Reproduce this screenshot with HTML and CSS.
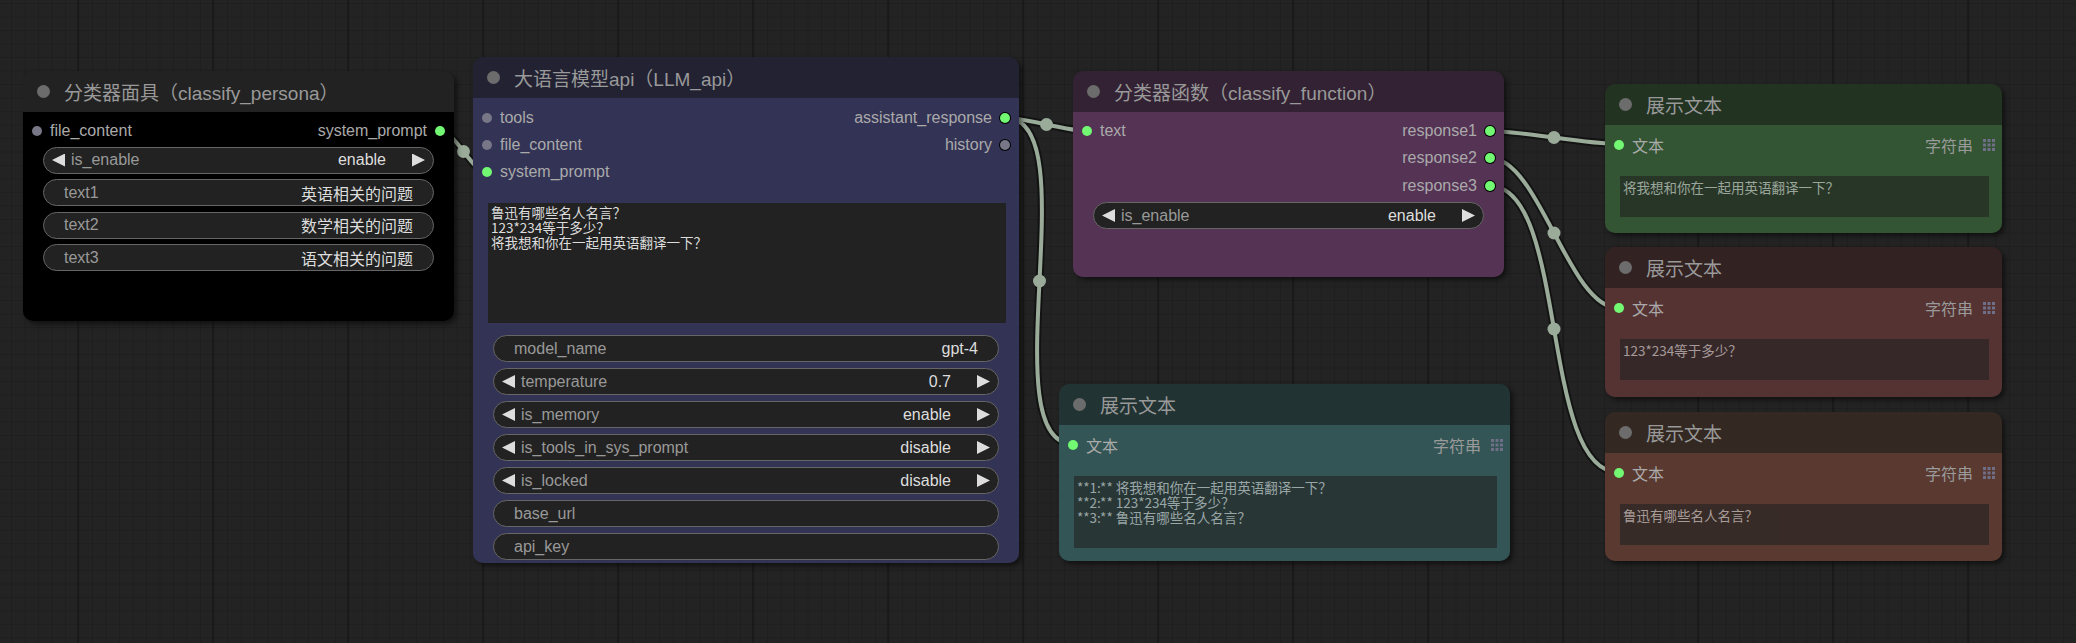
FILE: index.html
```html
<!DOCTYPE html>
<html lang="zh">
<head>
<meta charset="utf-8">
<title>ComfyUI graph</title>
<link rel="stylesheet" href="styles.css">
</head>
<body>
<div class="canvas">
  <svg class="links" width="2076" height="643" viewBox="0 0 2076 643">
    <g class="link-border">
      <path d="M440 131 C455.6 131 471.4 172 487 172"/>
      <path d="M1006 118 C1026.5 118 1066.5 131 1087 131"/>
      <path d="M1006 118 C1089.2 118 989.8 444 1073 444"/>
      <path d="M1490 131 C1522.2 131 1585.8 144 1618 144"/>
      <path d="M1490 158 C1539.3 158 1568.7 308 1618 308"/>
      <path d="M1490 186 C1568.3 186 1539.7 472 1618 472"/>
    </g>
    <g class="link-line">
      <path d="M440 131 C455.6 131 471.4 172 487 172"/>
      <path d="M1006 118 C1026.5 118 1066.5 131 1087 131"/>
      <path d="M1006 118 C1089.2 118 989.8 444 1073 444"/>
      <path d="M1490 131 C1522.2 131 1585.8 144 1618 144"/>
      <path d="M1490 158 C1539.3 158 1568.7 308 1618 308"/>
      <path d="M1490 186 C1568.3 186 1539.7 472 1618 472"/>
    </g>
    <g class="link-dot">
      <circle cx="463.5" cy="151.5" r="6.5"/>
      <circle cx="1046.5" cy="124.5" r="6.5"/>
      <circle cx="1039.5" cy="281" r="6.5"/>
      <circle cx="1554" cy="137.5" r="6.5"/>
      <circle cx="1554" cy="233" r="6.5"/>
      <circle cx="1554" cy="329" r="6.5"/>
    </g>
  </svg>

  <!-- classify_persona -->
  <div class="node c-black pos-persona">
    <div class="title"><span class="tdot"></span><span class="ttext">分类器面具（classify_persona）</span></div>
    <div class="body">
      <div class="rows r1">
        <div class="row">
          <div class="in"><span class="dot grey"></span><span>file_content</span></div>
          <div class="out"><span>system_prompt</span><span class="dot green"></span></div>
        </div>
      </div>
      <div class="widgets w1">
        <div class="widget combo"><span class="arr left"></span><span class="wl">is_enable</span><span class="wv">enable</span><span class="arr right"></span></div>
        <div class="widget text"><span class="wl">text1</span><span class="wv">英语相关的问题</span></div>
        <div class="widget text"><span class="wl">text2</span><span class="wv">数学相关的问题</span></div>
        <div class="widget text"><span class="wl">text3</span><span class="wv">语文相关的问题</span></div>
      </div>
    </div>
  </div>

  <!-- LLM_api -->
  <div class="node c-blue pos-llm">
    <div class="title"><span class="tdot"></span><span class="ttext">大语言模型api（LLM_api）</span></div>
    <div class="body">
      <div class="rows r2">
        <div class="row">
          <div class="in"><span class="dot grey"></span><span>tools</span></div>
          <div class="out"><span>assistant_response</span><span class="dot green"></span></div>
        </div>
        <div class="row">
          <div class="in"><span class="dot grey"></span><span>file_content</span></div>
          <div class="out"><span>history</span><span class="dot grey"></span></div>
        </div>
        <div class="row">
          <div class="in"><span class="dot green"></span><span>system_prompt</span></div>
        </div>
      </div>
      <div class="ta ta-llm">鲁迅有哪些名人名言？
123*234等于多少？
将我想和你在一起用英语翻译一下？</div>
      <div class="widgets w2">
        <div class="widget text"><span class="wl">model_name</span><span class="wv">gpt-4</span></div>
        <div class="widget combo"><span class="arr left"></span><span class="wl">temperature</span><span class="wv">0.7</span><span class="arr right"></span></div>
        <div class="widget combo"><span class="arr left"></span><span class="wl">is_memory</span><span class="wv">enable</span><span class="arr right"></span></div>
        <div class="widget combo"><span class="arr left"></span><span class="wl">is_tools_in_sys_prompt</span><span class="wv">disable</span><span class="arr right"></span></div>
        <div class="widget combo"><span class="arr left"></span><span class="wl">is_locked</span><span class="wv">disable</span><span class="arr right"></span></div>
        <div class="widget text"><span class="wl">base_url</span><span class="wv"></span></div>
        <div class="widget text"><span class="wl">api_key</span><span class="wv"></span></div>
      </div>
    </div>
  </div>

  <!-- classify_function -->
  <div class="node c-purple pos-func">
    <div class="title"><span class="tdot"></span><span class="ttext">分类器函数（classify_function）</span></div>
    <div class="body">
      <div class="rows r3">
        <div class="row">
          <div class="in"><span class="dot green"></span><span>text</span></div>
          <div class="out"><span>response1</span><span class="dot green"></span></div>
        </div>
        <div class="row">
          <div class="in"></div>
          <div class="out"><span>response2</span><span class="dot green"></span></div>
        </div>
        <div class="row">
          <div class="in"></div>
          <div class="out"><span>response3</span><span class="dot green"></span></div>
        </div>
      </div>
      <div class="widgets w3">
        <div class="widget combo"><span class="arr left"></span><span class="wl">is_enable</span><span class="wv">enable</span><span class="arr right"></span></div>
      </div>
    </div>
  </div>

  <!-- display: teal -->
  <div class="node c-cyan pos-show-all">
    <div class="title"><span class="tdot"></span><span class="ttext">展示文本</span></div>
    <div class="body">
      <div class="rows rd">
        <div class="row">
          <div class="in"><span class="dot green"></span><span>文本</span></div>
          <div class="type"><span>字符串</span><svg class="grip" width="12" height="12" viewBox="0 0 12 12"><rect x="0" y="0" width="3" height="3"/><rect x="4.5" y="0" width="3" height="3"/><rect x="9" y="0" width="3" height="3"/><rect x="0" y="4.5" width="3" height="3"/><rect x="4.5" y="4.5" width="3" height="3"/><rect x="9" y="4.5" width="3" height="3"/><rect x="0" y="9" width="3" height="3"/><rect x="4.5" y="9" width="3" height="3"/><rect x="9" y="9" width="3" height="3"/></svg></div>
        </div>
      </div>
      <div class="ta ta-show ta-tall">**1:** 将我想和你在一起用英语翻译一下？
**2:** 123*234等于多少？
**3:** 鲁迅有哪些名人名言？</div>
    </div>
  </div>

  <!-- display: green -->
  <div class="node c-green pos-show-1">
    <div class="title"><span class="tdot"></span><span class="ttext">展示文本</span></div>
    <div class="body">
      <div class="rows rd">
        <div class="row">
          <div class="in"><span class="dot green"></span><span>文本</span></div>
          <div class="type"><span>字符串</span><svg class="grip" width="12" height="12" viewBox="0 0 12 12"><rect x="0" y="0" width="3" height="3"/><rect x="4.5" y="0" width="3" height="3"/><rect x="9" y="0" width="3" height="3"/><rect x="0" y="4.5" width="3" height="3"/><rect x="4.5" y="4.5" width="3" height="3"/><rect x="9" y="4.5" width="3" height="3"/><rect x="0" y="9" width="3" height="3"/><rect x="4.5" y="9" width="3" height="3"/><rect x="9" y="9" width="3" height="3"/></svg></div>
        </div>
      </div>
      <div class="ta ta-show ta-short">将我想和你在一起用英语翻译一下？</div>
    </div>
  </div>

  <!-- display: red -->
  <div class="node c-red pos-show-2">
    <div class="title"><span class="tdot"></span><span class="ttext">展示文本</span></div>
    <div class="body">
      <div class="rows rd">
        <div class="row">
          <div class="in"><span class="dot green"></span><span>文本</span></div>
          <div class="type"><span>字符串</span><svg class="grip" width="12" height="12" viewBox="0 0 12 12"><rect x="0" y="0" width="3" height="3"/><rect x="4.5" y="0" width="3" height="3"/><rect x="9" y="0" width="3" height="3"/><rect x="0" y="4.5" width="3" height="3"/><rect x="4.5" y="4.5" width="3" height="3"/><rect x="9" y="4.5" width="3" height="3"/><rect x="0" y="9" width="3" height="3"/><rect x="4.5" y="9" width="3" height="3"/><rect x="9" y="9" width="3" height="3"/></svg></div>
        </div>
      </div>
      <div class="ta ta-show ta-short">123*234等于多少？</div>
    </div>
  </div>

  <!-- display: brown -->
  <div class="node c-brown pos-show-3">
    <div class="title"><span class="tdot"></span><span class="ttext">展示文本</span></div>
    <div class="body">
      <div class="rows rd">
        <div class="row">
          <div class="in"><span class="dot green"></span><span>文本</span></div>
          <div class="type"><span>字符串</span><svg class="grip" width="12" height="12" viewBox="0 0 12 12"><rect x="0" y="0" width="3" height="3"/><rect x="4.5" y="0" width="3" height="3"/><rect x="9" y="0" width="3" height="3"/><rect x="0" y="4.5" width="3" height="3"/><rect x="4.5" y="4.5" width="3" height="3"/><rect x="9" y="4.5" width="3" height="3"/><rect x="0" y="9" width="3" height="3"/><rect x="4.5" y="9" width="3" height="3"/><rect x="9" y="9" width="3" height="3"/></svg></div>
        </div>
      </div>
      <div class="ta ta-show ta-short">鲁迅有哪些名人名言？</div>
    </div>
  </div>
</div>
</body>
</html>
```

FILE: styles.css
```css
* { box-sizing: border-box; }
html, body { margin: 0; padding: 0; background: #222; overflow: hidden; }

.canvas {
  position: relative;
  width: 2076px;
  height: 643px;
  overflow: hidden;
  font-family: "Liberation Sans", "Noto Sans CJK SC", sans-serif;
  background-color: #232323;
  background-image:
    linear-gradient(90deg, rgba(0,0,0,0.22) 2px, transparent 2px),
    linear-gradient(90deg, rgba(0,0,0,0.13) 1px, transparent 1px),
    linear-gradient(rgba(0,0,0,0.13) 1px, transparent 1px);
  background-size: 135px 100%, 13.5px 13.5px, 13.5px 13.5px;
  background-position: 77px 0, 11px 3px, 11px 3px;
}

/* links */
.links { position: absolute; left: 0; top: 0; }
.link-border path { fill: none; stroke: rgba(0,0,0,0.45); stroke-width: 8; }
.link-line path { fill: none; stroke: #9aab9a; stroke-width: 4; }
.link-dot circle { fill: #9aab9a; }

/* nodes */
.node {
  position: absolute;
  display: flex;
  flex-direction: column;
  border-radius: 10px;
  overflow: hidden;
  box-shadow: 3px 3px 5px rgba(0,0,0,0.5);
}
.title {
  height: 41px;
  flex: none;
  display: flex;
  align-items: center;
  padding-left: 13.5px;
  gap: 14.5px;
}
.tdot { width: 13px; height: 13px; border-radius: 50%; background: #6c6c6c; flex: none; }
.ttext { color: #999; font-size: 19px; white-space: nowrap; }
.body { flex: 1; display: flex; flex-direction: column; }

.c-black .title { background: #222; }
.c-black .body { background: #000; }
.c-blue .title { background: #223; }
.c-blue .body { background: #335; }
.c-purple .title { background: #323; }
.c-purple .body { background: #535; }
.c-cyan .title { background: #233; }
.c-cyan .body { background: #355; }
.c-green .title { background: #232; }
.c-green .body { background: #353; }
.c-red .title { background: #322; }
.c-red .body { background: #533; }
.c-brown .title { background: #332922; }
.c-brown .body { background: #593930; }

.pos-persona { left: 23px; top: 71px; width: 431px; height: 250px; }
.pos-llm { left: 473px; top: 57px; width: 546px; height: 506px; }
.pos-func { left: 1073px; top: 71px; width: 431px; height: 206px; }
.pos-show-all { left: 1059px; top: 384px; width: 451px; height: 177px; }
.pos-show-1 { left: 1605px; top: 84px; width: 397px; height: 149px; }
.pos-show-2 { left: 1605px; top: 247px; width: 397px; height: 150px; }
.pos-show-3 { left: 1605px; top: 412px; width: 397px; height: 149px; }

/* slots */
.rows { display: flex; flex-direction: column; padding: 0 9px; }
.r1 { padding-top: 5.5px; }
.r2 { padding-top: 6.5px; }
.r3 { padding-top: 5px; }
.rd { padding-top: 6px; padding-right: 7px; }
.row {
  height: 27px;
  display: flex;
  align-items: center;
  justify-content: space-between;
  font-size: 16px;
  color: #aaa;
  white-space: nowrap;
}
.r3 .row { height: 27.5px; }
.in, .out, .type { display: flex; align-items: center; gap: 8px; }
.dot { width: 10px; height: 10px; border-radius: 50%; flex: none; }
.dot.green { background: #72f872; }
.dot.grey { background: #778; }
.out .dot { box-shadow: 0 0 0 1px #000; }
.type { gap: 10px; color: #9a9a9a; }
.grip rect { fill: #6f6f88; }

/* widgets */
.widgets { display: flex; flex-direction: column; margin: 0 20px; }
.w1 { margin-top: 2px; gap: 5.5px; }
.w2 { margin-top: 12px; gap: 6px; }
.w3 { margin-top: 2.5px; }
.widget {
  height: 27px;
  border: 1px solid #666;
  border-radius: 14px;
  background: #222;
  display: flex;
  align-items: center;
  font-size: 16px;
  white-space: nowrap;
}
.widget.text { padding: 0 20px; }
.widget.combo { padding: 0 8px; }
.wl { color: #999; flex: 1; }
.wv { color: #ddd; }
.combo .wl { margin-left: 6px; }
.combo .wv { margin-right: 26px; }
.arr { width: 13px; height: 13px; background: #ddd; flex: none; }
.arr.left { clip-path: polygon(100% 0, 0 50%, 100% 100%); }
.arr.right { clip-path: polygon(0 0, 100% 50%, 0 100%); }

/* text areas */
.ta {
  white-space: pre;
  font-family: "Noto Sans CJK SC", "Liberation Mono", monospace;
  font-size: 13.5px;
  line-height: 15px;
  color: #ddd;
  background: #222;
  margin: 0 13px 0 15px;
  overflow: hidden;
}
.ta-llm { height: 120px; margin-top: 17.5px; padding: 2px 3px; }
.ta-show { opacity: 0.6; margin-top: 18px; padding: 4px 3px; }
.ta-tall { height: 72px; }
.ta-short { height: 41px; }
```
